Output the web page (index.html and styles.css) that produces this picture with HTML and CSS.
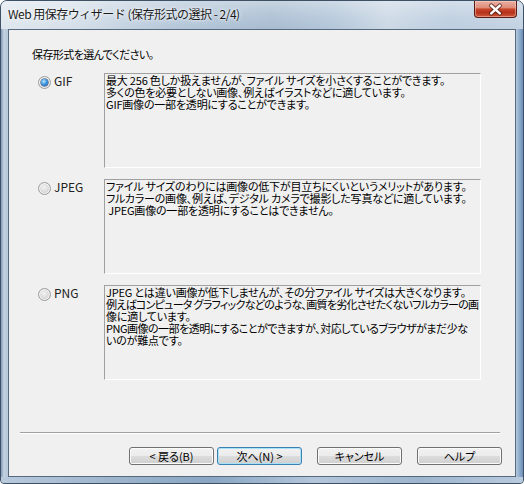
FILE: index.html
```html
<!DOCTYPE html>
<html lang="ja">
<head>
<meta charset="utf-8">
<title>Web 用保存ウィザード</title>
<link rel="stylesheet" href="styles.css">
</head>
<body>
<div class="window">
  <div class="titlebar">
    <span class="title">Web 用保存ウィザード (保存形式の選択 - 2/4)</span>
    <button class="close" aria-label="閉じる">
      <svg width="43" height="17" viewBox="0 0 43 17">
        <path d="M17 4.5 L26 12.5 M26 4.5 L17 12.5" stroke="#4a1a12" stroke-width="4.6" stroke-linecap="round" opacity="0.75"/>
        <path d="M17 4.5 L26 12.5 M26 4.5 L17 12.5" stroke="#ffffff" stroke-width="2.6" stroke-linecap="round"/>
      </svg>
    </button>
  </div>
  <div class="client">
    <p class="prompt">保存形式を選んでください。</p>
    <div class="options">
      <div class="option">
        <label class="choice"><span class="radio checked"></span>GIF</label>
        <div class="desc">
          <div class="line">最大 256 色しか扱えませんが、ファイル サイズを小さくすることができます。</div>
          <div class="line">多くの色を必要としない画像、例えばイラストなどに適しています。</div>
          <div class="line">GIF画像の一部を透明にすることができます。</div>
        </div>
      </div>
      <div class="option">
        <label class="choice"><span class="radio"></span>JPEG</label>
        <div class="desc">
          <div class="line">ファイル サイズのわりには画像の低下が目立ちにくいというメリットがあります。</div>
          <div class="line">フルカラーの画像、例えば、デジタル カメラで撮影した写真などに適しています。</div>
          <div class="line">&nbsp;JPEG画像の一部を透明にすることはできません。</div>
        </div>
      </div>
      <div class="option">
        <label class="choice"><span class="radio"></span>PNG</label>
        <div class="desc">
          <div class="line">JPEG とは違い画像が低下しませんが、その分ファイル サイズは大きくなります。</div>
          <div class="line tighter">例えばコンピュータ グラフィックなどのような、画質を劣化させたくないフルカラーの画</div>
          <div class="line">像に適しています。</div>
          <div class="line tight">PNG画像の一部を透明にすることができますが、対応しているブラウザがまだ少な</div>
          <div class="line">いのが難点です。</div>
        </div>
      </div>
    </div>
    <div class="sep"></div>
    <div class="buttons">
      <button class="btn">&lt; 戻る(B)</button>
      <button class="btn default">次へ(N) &gt;</button>
      <button class="btn spaced">キャンセル</button>
      <button class="btn spaced">ヘルプ</button>
    </div>
  </div>
  <div class="bottom"></div>
</div>
</body>
</html>
```

FILE: styles.css
```css
html, body {
  margin: 0;
  padding: 0;
}
body {
  width: 524px;
  height: 484px;
  overflow: hidden;
  background: #ffffff;
  font-family: "Noto Sans CJK JP", "Noto Sans", sans-serif;
  color: #000;
}
.window {
  width: 524px;
  height: 484px;
  box-sizing: border-box;
  border: 1px solid #3e5064;
  border-radius: 7px 7px 4px 4px;
  background: linear-gradient(90deg, #7f9aba 0, #c6d4e2 3px, #b9cadc 5px, #bfcfe0 50%, #c4d3e2 calc(100% - 8px), #a8bfd7 calc(100% - 6px), #6c8fb8 100%);
  display: flex;
  flex-direction: column;
  overflow: hidden;
}
.titlebar {
  height: 28px;
  flex: none;
  display: flex;
  align-items: flex-start;
  background:
    linear-gradient(180deg, rgba(255,255,255,0.35) 0, rgba(255,255,255,0.1) 60%, rgba(255,255,255,0) 100%),
    linear-gradient(90deg, #dfe7ee 0, #d5dfe9 14%, #b6c8da 32%, #a8bcd1 52%, #b4c7da 64%, #cbd8e5 74%, #bccddf 86%, #c3d2e2 100%);
}
.title {
  margin: 5px 0 0 7px;
  font-size: 12px;
  line-height: 16px;
  letter-spacing: -0.5px;
  color: #1a1a1a;
  white-space: nowrap;
  text-shadow: 0 0 5px rgba(255,255,255,0.95), 0 0 2px rgba(255,255,255,0.9);
}
.close {
  margin-left: auto;
  margin-right: 6px;
  width: 43px;
  height: 17px;
  padding: 0;
  border: 1px solid #5a1c12;
  border-top: none;
  border-radius: 0 0 4px 4px;
  background: linear-gradient(180deg, #eab0a2 0, #df8d7b 42%, #c8472c 50%, #b5321b 72%, #cf5a3e 100%);
  box-shadow: inset 0 0 0 1px rgba(255,220,210,0.45);
  display: flex;
  align-items: center;
  justify-content: center;
}
.close svg {
  display: block;
}
.client {
  margin: 0 7px;
  height: 448px;
  flex: none;
  box-sizing: border-box;
  border: 1px solid #56697d;
  background: #f0f0f0;
  display: flex;
  flex-direction: column;
}
.bottom {
  flex: 1;
  background: linear-gradient(90deg, #b8cadc 0, #9fb6cd 20%, #8aa6c3 40%, #b3c6da 60%, #9db5ce 80%, #b9cbdd 100%);
}
.prompt {
  margin: 18px 0 0 23px;
  font-size: 11px;
  line-height: 13px;
  letter-spacing: -0.6px;
  font-feature-settings: "palt";
}
.options {
  margin-top: 12px;
  padding-left: 29px;
  display: flex;
  flex-direction: column;
  gap: 11px;
}
.option {
  display: flex;
  height: 95px;
}
.choice {
  width: 66px;
  flex: none;
  display: flex;
  align-items: flex-start;
  padding-top: 1px;
  font-size: 12px;
  line-height: 14px;
  color: #222;
}
.radio {
  width: 13px;
  height: 13px;
  margin-top: 2px;
  margin-right: 3px;
  box-sizing: border-box;
  border-radius: 50%;
  border: 1px solid #9a9c9e;
  background: radial-gradient(circle at 45% 40%, #f2f2f2 0, #dedede 45%, #c4c4c4 100%);
  box-shadow: inset 0 0 0 1px rgba(255,255,255,0.7);
  display: flex;
  align-items: center;
  justify-content: center;
  flex: none;
}
.radio.checked::after {
  content: "";
  width: 7px;
  height: 7px;
  border-radius: 50%;
  background: radial-gradient(circle at 40% 35%, #bfe9ff 0, #3f98e2 45%, #0f4f9e 100%);
  box-shadow: 0 0 0 0.5px #1c3f6e;
}
.desc {
  width: 377px;
  height: 95px;
  box-sizing: border-box;
  border-style: solid;
  border-width: 1px;
  border-color: #a0a0a0 #ffffff #ffffff #a0a0a0;
  padding: 0 0 0 1px;
  font-size: 11px;
  letter-spacing: -0.2px;
  white-space: nowrap;
  overflow: hidden;
  font-feature-settings: "palt";
  display: flex;
  flex-direction: column;
  align-items: flex-start;
}
.line {
  height: 12px;
  line-height: 12px;
  flex: none;
  width: max-content;
}
.line.tight {
  letter-spacing: -0.5px;
}
.line.tighter {
  letter-spacing: -0.72px;
}
.sep {
  margin: 52px 0 0 11px;
  width: 480px;
  height: 0;
  border-top: 1px solid #a0a0a0;
  border-bottom: 1px solid #ffffff;
}
.buttons {
  margin-top: 13px;
  padding-left: 120px;
  display: flex;
  gap: 3px;
}
.btn {
  width: 85px;
  height: 18px;
  padding: 0;
  box-sizing: border-box;
  border: 1px solid #707070;
  border-radius: 3px;
  background: linear-gradient(180deg, #f2f2f2 0, #ebebeb 50%, #dddddd 50%, #cfcfcf 100%);
  box-shadow: inset 0 0 0 1px #fbfbfb;
  font-family: "Noto Sans CJK JP", sans-serif;
  font-size: 11px;
  line-height: 14px;
  color: #000;
  text-align: center;
  font-feature-settings: "palt";
}
.btn.default {
  border-color: #3c7fb1;
  box-shadow: inset 0 0 0 1px #a8e2f8;
}
.btn.spaced {
  margin-left: 12px;
}
```
